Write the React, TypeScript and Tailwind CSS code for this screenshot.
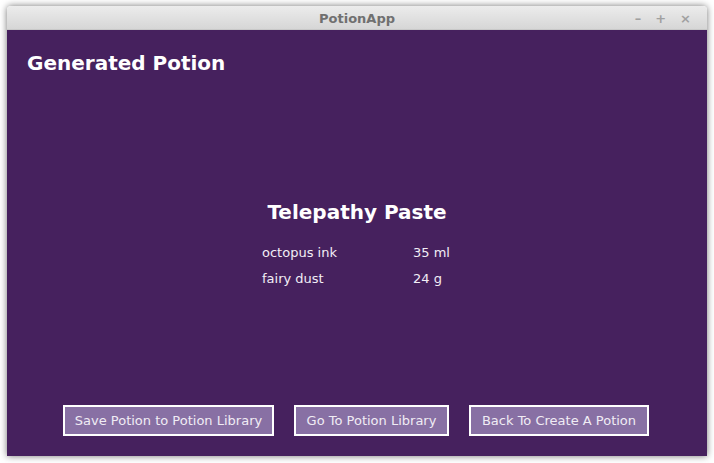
const font = { fontFamily: '"DejaVu Sans", Verdana, sans-serif' };

const ingredients = [
  { name: "octopus ink", amount: "35 ml" },
  { name: "fairy dust", amount: "24 g" },
];

const actions = [
  { label: "Save Potion to Potion Library", width: "w-[211px]" },
  { label: "Go To Potion Library", width: "w-[155px]" },
  { label: "Back To Create A Potion", width: "w-[180px]" },
];

export default function App() {
  return (
    <div className="w-[714px] h-[463px] bg-white pl-[7px] pt-[6px] overflow-hidden" style={font}>
      <div className="w-[700px] h-[450px] flex flex-col rounded-t-[4px] shadow-[0_0_7px_rgba(0,0,0,0.55)]">
        {/* title bar */}
        <div className="h-[24px] relative flex items-center justify-center pt-[3px] rounded-t-[4px] bg-gradient-to-b from-[#ececec] to-[#d6d6d6] border-b border-[#c8c8c8]">
          <span className="text-[13px] font-bold text-[#707070]">PotionApp</span>
          <div className="absolute right-[16px] top-0 h-full pt-[3px] flex items-center gap-[14px] text-[#a0a0a0] text-[13px] font-bold">
            <span>–</span>
            <span>+</span>
            <span>×</span>
          </div>
        </div>

        {/* content */}
        <div className="flex-1 flex flex-col bg-[#46215e] text-white">
          <h1 className="pl-[20px] pt-[21px] text-[20px] font-bold leading-[24px]">Generated Potion</h1>

          <div className="flex-1 flex flex-col items-center justify-center pt-[7px]">
            <h2 className="text-[20px] font-bold leading-[24px]">Telepathy Paste</h2>
            <div className="w-[190px] mt-[21px] flex flex-col gap-[10px] text-[13px] text-[#f2eef6]">
              {ingredients.map((i) => (
                <div key={i.name} className="grid grid-cols-[151px_auto] leading-[16px]">
                  <span>{i.name}</span>
                  <span>{i.amount}</span>
                </div>
              ))}
            </div>
          </div>

          <div className="flex justify-center gap-[20px] pb-[20px] pr-[2px]">
            {actions.map((a) => (
              <button
                key={a.label}
                className={`${a.width} h-[31px] bg-[#8870a4] border-2 border-white text-[13px] text-[#f0ecf4]`}
              >
                {a.label}
              </button>
            ))}
          </div>
        </div>
      </div>
    </div>
  );
}
